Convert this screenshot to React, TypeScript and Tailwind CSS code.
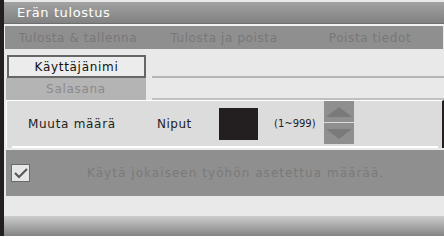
import React from 'react';

const font = { fontFamily: '"DejaVu Sans", "Liberation Sans", sans-serif' };

const tabs = ['Tulosta & tallenna', 'Tulosta ja poista', 'Poista tiedot'];

export default function App() {
  return (
    <div className="w-[444px] h-[236px] flex bg-[#231f20] overflow-hidden" style={font}>
      <div className="w-[4px] shrink-0" />
      <div className="flex-1 flex flex-col pt-[2px] bg-[#e9e9e9]">
        {/* Title bar */}
        <div className="h-[22px] shrink-0 flex items-center pl-[13px] bg-gradient-to-b from-[#a2a2a2] to-[#818181] border-b border-[#6e6e6e]">
          <span className="text-white text-[13px] tracking-[0.6px]">Erän tulostus</span>
        </div>

        {/* Tab row */}
        <div className="h-[25px] shrink-0 flex border-t-2 border-l border-[#f2f2f2] bg-[#8f8f8f] mr-[1px]">
          {tabs.map((t) => (
            <div key={t} className="flex-1 flex items-center justify-center text-[12px] text-[#787878] tracking-[0.6px]">
              {t}
            </div>
          ))}
        </div>

        {/* Login fields */}
        <div className="flex pl-[2px] pt-[6px]">
          <div className="w-[140px] flex flex-col">
            <div className="h-[23px] flex items-center justify-center border-2 border-[#666666] bg-[#ececec] text-[12px] text-[#111] tracking-[0.7px] ml-[1px]">
              Käyttäjänimi
            </div>
            <div className="h-[22px] flex items-center justify-center bg-[#b4b4b4] text-[12px] text-[#8a8a8a] tracking-[0.7px]">
              Salasana
            </div>
          </div>
          <div className="flex-1 flex flex-col pl-[6px]">
            <div className="h-[23px] border-b-2 border-[#b4b4b4]" />
            <div className="h-[22px] border-b-2 border-[#c0c0c0]" />
          </div>
        </div>

        {/* Quantity panel */}
        <div className="h-[48px] ml-[2px] flex items-center bg-[#dcdcdc] border-t border-l border-white border-r-2 border-r-[#231f20]">
          <div className="flex-1 h-full flex items-center border-b-2 border-white mr-[4px] ml-[5px]">
            <span className="w-[145px] pl-[16px] text-[12px] text-[#222] tracking-[0.7px]">Muuta määrä</span>
            <span className="w-[62px] text-[12px] text-[#222] tracking-[0.5px]">Niput</span>
            <div className="w-[39px] h-[32px] bg-[#231f20]" />
            <span className="ml-[16px] w-[50px] text-[10px] text-[#222]">(1~999)</span>
            <div className="flex flex-col w-[30px] h-[43px] gap-[1px] mt-[-2px]">
              <div className="flex-1 bg-[#8f8f8f] flex items-center justify-center">
                <svg width="26" height="10" viewBox="0 0 26 10">
                  <polygon points="13,0 26,10 0,10" fill="#7a7a7a" />
                </svg>
              </div>
              <div className="flex-1 bg-[#8f8f8f] flex items-center justify-center">
                <svg width="26" height="10" viewBox="0 0 26 10">
                  <polygon points="0,0 26,0 13,10" fill="#7a7a7a" />
                </svg>
              </div>
            </div>
          </div>
        </div>

        {/* Apply to all */}
        <div className="h-[46px] mt-[2px] ml-[2px] flex items-center bg-[#8f8f8f]">
          <div className="ml-[5px] w-[19px] h-[18px] border border-[#6a6a6a] bg-[#e6e6e6] flex items-center justify-center">
            <svg width="15" height="12" viewBox="0 0 15 12">
              <polyline points="2,6 6,10 14,2" fill="none" stroke="#555" strokeWidth="2" />
            </svg>
          </div>
          <span className="ml-[57px] text-[12px] text-[#7a7a7a] tracking-[1.05px]">
            Käytä jokaiseen työhön asetettua määrää.
          </span>
        </div>

        <div className="flex-1" />
        <div className="h-[20px] shrink-0 bg-gradient-to-b from-[#cdcdcd] to-[#848484]" />
      </div>
    </div>
  );
}
